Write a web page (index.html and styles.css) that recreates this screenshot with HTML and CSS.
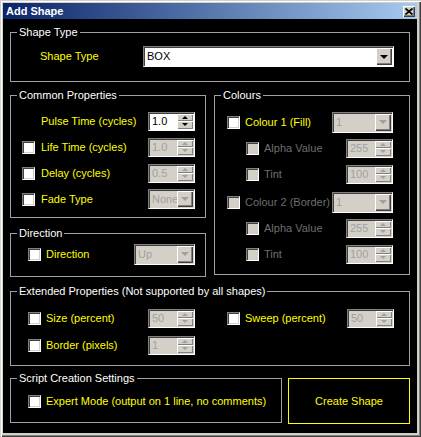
FILE: index.html
```html
<!DOCTYPE html>
<html>
<head>
<meta charset="utf-8">
<title>Add Shape</title>
<link rel="stylesheet" href="styles.css">
</head>
<body>
<div class="window">
  <div class="titlebar">
    <span class="title">Add Shape</span>
    <span class="close"><svg width="8" height="7" viewBox="0 0 8 7"><path d="M0.5 0.5 L7.5 6.5 M7.5 0.5 L0.5 6.5" stroke="#000" stroke-width="1.7"/></svg></span>
  </div>
  <div class="content">
    <fieldset class="group g-shape">
      <legend>Shape Type</legend>
      <div class="shape-row">
        <span class="lbl">Shape Type</span>
        <div class="combo"><span class="val">BOX</span><span class="dd"><i class="arrow"></i></span></div>
      </div>
    </fieldset>

    <div class="cols">
      <div class="col">
        <fieldset class="group g-common">
          <legend>Common Properties</legend>
          <div class="rows">
            <div class="row"><span></span><span class="lbl">Pulse Time (cycles)</span><div class="spinner"><span class="val">1.0</span><span class="spin"><span class="sb"><i class="up"></i></span><span class="sb"><i class="down"></i></span></span></div></div>
            <div class="row"><span class="cb"></span><span class="lbl">Life Time (cycles)</span><div class="spinner dis"><span class="val">1.0</span><span class="spin"><span class="sb"><i class="up"></i></span><span class="sb"><i class="down"></i></span></span></div></div>
            <div class="row"><span class="cb"></span><span class="lbl">Delay (cycles)</span><div class="spinner dis"><span class="val">0.5</span><span class="spin"><span class="sb"><i class="up"></i></span><span class="sb"><i class="down"></i></span></span></div></div>
            <div class="row"><span class="cb"></span><span class="lbl">Fade Type</span><div class="combo dis"><span class="val">None</span><span class="dd"><i class="arrow"></i></span></div></div>
          </div>
        </fieldset>
        <fieldset class="group g-dir">
          <legend>Direction</legend>
          <div class="dir-row">
            <span class="cb"></span><span class="lbl">Direction</span><div class="combo dis"><span class="val">Up</span><span class="dd"><i class="arrow"></i></span></div>
          </div>
        </fieldset>
      </div>

      <fieldset class="group g-colours">
        <legend>Colours</legend>
        <div class="crows">
          <div class="crow"><span class="cb"></span><span class="lbl">Colour 1 (Fill)</span><div class="combo dis"><span class="val">1</span><span class="dd"><i class="arrow"></i></span></div></div>
          <div class="crow sub"><span class="cb dis"></span><span class="lbl dim">Alpha Value</span><div class="spinner dis"><span class="val">255</span><span class="spin"><span class="sb"><i class="up"></i></span><span class="sb"><i class="down"></i></span></span></div></div>
          <div class="crow sub"><span class="cb dis"></span><span class="lbl dim">Tint</span><div class="spinner dis"><span class="val">100</span><span class="spin"><span class="sb"><i class="up"></i></span><span class="sb"><i class="down"></i></span></span></div></div>
          <div class="crow second"><span class="cb dis"></span><span class="lbl dim">Colour 2 (Border)</span><div class="combo dis"><span class="val">1</span><span class="dd"><i class="arrow"></i></span></div></div>
          <div class="crow sub"><span class="cb dis"></span><span class="lbl dim">Alpha Value</span><div class="spinner dis"><span class="val">255</span><span class="spin"><span class="sb"><i class="up"></i></span><span class="sb"><i class="down"></i></span></span></div></div>
          <div class="crow sub"><span class="cb dis"></span><span class="lbl dim">Tint</span><div class="spinner dis"><span class="val">100</span><span class="spin"><span class="sb"><i class="up"></i></span><span class="sb"><i class="down"></i></span></span></div></div>
        </div>
      </fieldset>
    </div>

    <fieldset class="group g-ext">
      <legend>Extended Properties (Not supported by all shapes)</legend>
      <div class="ext-grid">
        <div class="cell"><span class="cb"></span><span class="lbl">Size (percent)</span><div class="spinner dis"><span class="val">50</span><span class="spin"><span class="sb"><i class="up"></i></span><span class="sb"><i class="down"></i></span></span></div></div>
        <div class="cell"><span class="cb"></span><span class="lbl">Sweep (percent)</span><div class="spinner dis"><span class="val">50</span><span class="spin"><span class="sb"><i class="up"></i></span><span class="sb"><i class="down"></i></span></span></div></div>
        <div class="cell"><span class="cb"></span><span class="lbl">Border (pixels)</span><div class="spinner dis"><span class="val">1</span><span class="spin"><span class="sb"><i class="up"></i></span><span class="sb"><i class="down"></i></span></span></div></div>
      </div>
    </fieldset>

    <div class="bottom">
      <fieldset class="group g-script">
        <legend>Script Creation Settings</legend>
        <div class="script-row"><span class="cb"></span><span class="lbl">Expert Mode (output on 1 line, no comments)</span></div>
      </fieldset>
      <div class="create">Create Shape</div>
    </div>
  </div>
</div>
</body>
</html>
```

FILE: styles.css
```css
* { box-sizing: border-box; }
html, body { margin: 0; padding: 0; }
body {
  width: 421px;
  height: 437px;
  overflow: hidden;
  background: #d4d0c8;
  font-family: "Liberation Sans", Arial, sans-serif;
  font-size: 11px;
  line-height: 13px;
}
.window {
  width: 421px;
  height: 437px;
  padding: 3px 4px 4px 3px;
  background: #d4d0c8;
  display: flex;
  flex-direction: column;
  box-shadow: inset 1px 1px 0 #d4d0c8, inset 2px 2px 0 #fff, inset -1px -1px 0 #404040, inset -2px -2px 0 #808080;
}
.titlebar {
  height: 16px;
  flex: none;
  display: flex;
  align-items: center;
  justify-content: space-between;
  padding: 0 2px 0 3px;
  background: linear-gradient(to right, #0a246a, #a6caf0);
}
.title { color: #fff; font-weight: bold; }
.close {
  width: 12px;
  height: 11px;
  background: #d4d0c8;
  display: flex;
  align-items: center;
  justify-content: center;
  box-shadow: inset 1px 1px 0 #fff, inset -1px -1px 0 #404040, inset -2px -2px 0 #808080;
}
.content {
  flex: 1;
  background: #000;
  padding: 7px 7px 0 7px;
  display: flex;
  flex-direction: column;
}
.group {
  margin: 0;
  padding: 0;
  min-width: 0;
  border: 1px solid #a0a0a0;
}
legend {
  margin-left: 6px;
  padding: 0 2px;
  color: #fff;
  line-height: 13px;
}
.lbl { color: #ffff00; white-space: nowrap; }
.lbl.dim { color: #6e6e6e; }

/* Checkbox */
.cb {
  width: 13px;
  height: 13px;
  background: #fff;
  border: 1px solid;
  border-color: #808080 #fff #fff #808080;
  box-shadow: inset 1px 1px 0 #404040, inset -1px -1px 0 #d4d0c8;
}
.cb.dis { background: #d4d0c8; }

/* Fields */
.spinner, .combo {
  display: flex;
  background: #fff;
  border: 1px solid;
  border-color: #808080 #fff #fff #808080;
  box-shadow: inset 1px 1px 0 #404040;
  padding: 1px;
}
.spinner { width: 47px; height: 19px; }
.combo { width: 61px; height: 21px; }
.val {
  flex: 1;
  color: #000;
  padding-left: 2px;
  align-self: center;
  white-space: nowrap;
  overflow: hidden;
}
.dis { background: #d4d0c8; }
.dis .val { color: #a0a0a0; }
.spin {
  width: 16px;
  display: flex;
  flex-direction: column;
}
.sb {
  flex: 1;
  background: #d4d0c8;
  display: flex;
  align-items: center;
  justify-content: center;
  box-shadow: inset 1px 1px 0 #fff, inset -1px -1px 0 #808080;
}
.up, .down {
  width: 0;
  height: 0;
  border-left: 3px solid transparent;
  border-right: 3px solid transparent;
}
.up { border-bottom: 3px solid #000; }
.down { border-top: 3px solid #000; }
.dd {
  width: 16px;
  background: #d4d0c8;
  display: flex;
  align-items: center;
  justify-content: center;
  box-shadow: inset 1px 1px 0 #fff, inset -1px -1px 0 #404040, inset -2px -2px 0 #808080;
}
.arrow {
  width: 0;
  height: 0;
  border-left: 4px solid transparent;
  border-right: 4px solid transparent;
  border-top: 4px solid #000;
}
.dis .up { border-bottom-color: #a0a0a0; }
.dis .down, .dis .arrow { border-top-color: #a0a0a0; }

/* Shape Type group */
.g-shape { flex: none; }
.shape-row {
  display: grid;
  grid-template-columns: 103px 251px;
  align-items: center;
  padding: 7px 14px 14px 29px;
}
.shape-row .combo { width: 251px; height: 21px; }

/* columns */
.cols {
  margin-top: 7px;
  display: grid;
  grid-template-columns: 196px 196px;
  column-gap: 8px;
  align-items: start;
}
.col { display: flex; flex-direction: column; }

.rows { padding: 6px 10px 5px 11px; }
.row {
  height: 26px;
  display: grid;
  grid-template-columns: 13px 1fr 47px;
  column-gap: 6px;
  align-items: center;
}
.row .combo { width: 47px; height: 20px; }

.g-dir { margin-top: 9px; }
.dir-row {
  height: 26px;
  margin: 1px 10px 9px 17px;
  display: grid;
  grid-template-columns: 13px 1fr 61px;
  column-gap: 5px;
  align-items: center;
}

.crows { padding: 7px 16px 7px 12px; }
.crow {
  height: 26px;
  display: grid;
  grid-template-columns: 13px minmax(0, 1fr) 61px;
  align-items: center;
}
.crow .lbl { margin-left: 5px; }
.crow .spinner { justify-self: end; }
.crow.sub { padding-left: 19px; }
.crow.second { margin-top: 2px; }

.g-ext { margin-top: 8px; flex: none; }
.ext-grid {
  padding: 7px 15px 7px 17px;
  display: grid;
  grid-template-columns: 167px 167px;
  grid-auto-rows: 26px;
  column-gap: 32px;
  row-gap: 1px;
}
.cell {
  display: grid;
  grid-template-columns: 13px 1fr 47px;
  column-gap: 5px;
  align-items: center;
}

.bottom {
  margin-top: 6px;
  display: flex;
  column-gap: 6px;
  align-items: flex-start;
}
.g-script { width: 272px; flex: none; }
.script-row {
  height: 26px;
  margin: 3px 0 8px 17px;
  display: flex;
  align-items: center;
  column-gap: 5px;
}
.create {
  margin-top: 6px;
  width: 122px;
  height: 46px;
  border: 1px solid #ffff00;
  color: #ffff00;
  display: flex;
  align-items: center;
  justify-content: center;
}
```
